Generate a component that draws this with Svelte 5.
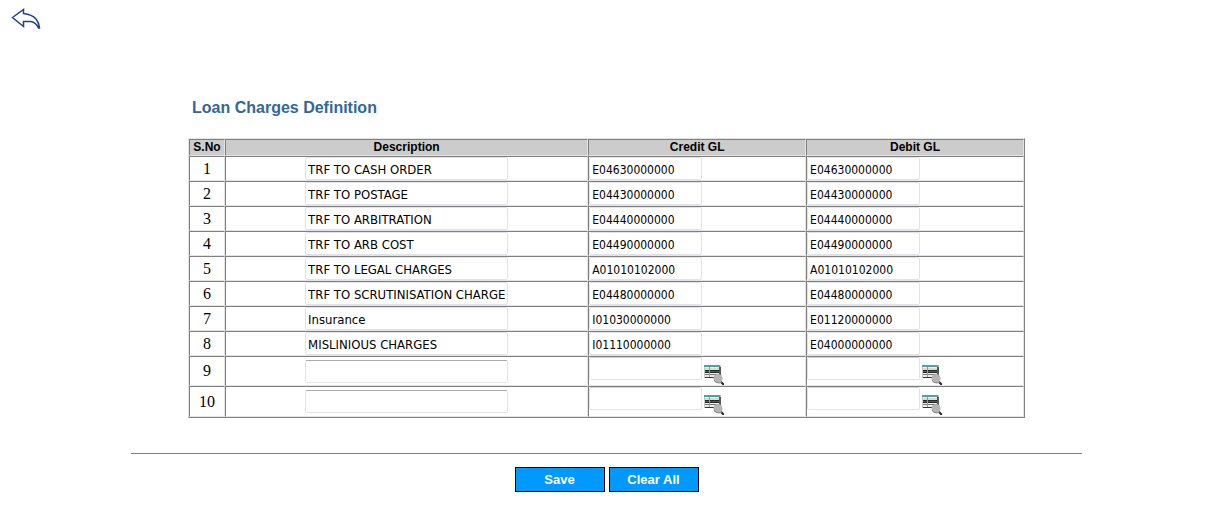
<script>
  const rows = $state([
    { description: 'TRF TO CASH ORDER', credit: 'E04630000000', debit: 'E04630000000' },
    { description: 'TRF TO POSTAGE', credit: 'E04430000000', debit: 'E04430000000' },
    { description: 'TRF TO ARBITRATION', credit: 'E04440000000', debit: 'E04440000000' },
    { description: 'TRF TO ARB COST', credit: 'E04490000000', debit: 'E04490000000' },
    { description: 'TRF TO LEGAL CHARGES', credit: 'A01010102000', debit: 'A01010102000' },
    { description: 'TRF TO SCRUTINISATION CHARGES', credit: 'E04480000000', debit: 'E04480000000' },
    { description: 'Insurance', credit: 'I01030000000', debit: 'E01120000000' },
    { description: 'MISLINIOUS CHARGES', credit: 'I01110000000', debit: 'E04000000000' },
    { description: '', credit: '', debit: '', lookup: true },
    { description: '', credit: '', debit: '', lookup: true }
  ]);

  function clearAll() {
    for (const row of rows) {
      row.description = '';
      row.credit = '';
      row.debit = '';
    }
  }
</script>

{#snippet lookupButton(label)}
  <button type="button" class="lookup" aria-label={label}>
    <svg width="20" height="20" viewBox="0 0 20 20" aria-hidden="true">
      <path d="M0 0h17v13H0z" fill="#c4c8c8" />
      <path d="M0 0h16v2H0z" fill="#4aa5a2" />
      <path d="M1 2h14v1H1z" fill="#f4f4f4" />
      <path d="M1 3h4v2H1zM6 3h9v2H6z" fill="#d5dada" />
      <path d="M1 5h15v3H1z" fill="#262626" />
      <path d="M1 6h15v1H1z" fill="#555" />
      <path d="M1 8h4v1H1zM6 8h9v1H6zM1 10h4v2H1zM6 10h5v2H6z" fill="#eee" />
      <path d="M1 9h14v1H1z" fill="#777" />
      <path d="M1 12h11v1H1z" fill="#333" />
      <path d="M5 2h1v10H5z" fill="#999" />
      <path d="M15 2h2v8h-2z" fill="#555" />
      <path d="M16 16l4 4" stroke="#222" stroke-width="2" />
      <circle cx="14" cy="13.500" r="4.500" fill="#b4b4b4" />
      <path d="M10 15q1 3 5 3l3-1" fill="none" stroke="#888" />
    </svg>
  </button>
{/snippet}

<header>
  <a href="#back" aria-label="Back">
    <svg width="30" height="22" viewBox="0 0 30 22" aria-hidden="true">
      <path
        d="M1.500 9.500L12.500 1.500V5.500Q21 6.500 25 11Q28 14.500 28.500 20H27.500Q25 14.500 20 13.500H12.500V18.500L1.500 9.500Z"
        fill="#fff"
        stroke="#24408c"
        stroke-width="1.500"
      />
    </svg>
  </a>
</header>

<main>
  <form onsubmit={(event) => event.preventDefault()}>
    <section>
      <h1>Loan Charges Definition</h1>
      <table>
        <thead>
          <tr>
            <th scope="col" class="number">S.No</th>
            <th scope="col" class="description">Description</th>
            <th scope="col">Credit GL</th>
            <th scope="col">Debit GL</th>
          </tr>
        </thead>
        <tbody>
          {#each rows as row, i}
            <tr class:open={row.lookup}>
              <td class="number">{i + 1}</td>
              <td class="description">
                <input type="text" aria-label="Description {i + 1}" bind:value={row.description} />
              </td>
              <td>
                <div class="account">
                  <input type="text" aria-label="Credit GL {i + 1}" bind:value={row.credit} />
                  {#if row.lookup}{@render lookupButton(`Find credit GL ${i + 1}`)}{/if}
                </div>
              </td>
              <td>
                <div class="account">
                  <input type="text" aria-label="Debit GL {i + 1}" bind:value={row.debit} />
                  {#if row.lookup}{@render lookupButton(`Find debit GL ${i + 1}`)}{/if}
                </div>
              </td>
            </tr>
          {/each}
        </tbody>
      </table>
    </section>
    <hr />
    <div class="actions">
      <button type="submit">Save</button>
      <button type="button" onclick={clearAll}>Clear All</button>
    </div>
  </form>
</main>

<style>
  :global(body) {
    background: #fff;
    color: #000;
  }

  header {
    display: flex;
    padding: 8px 11px;
  }

  header a,
  header svg,
  .lookup svg {
    display: block;
  }

  section {
    width: 69%;
    margin: 0 auto;
    padding-top: 61px;
  }

  h1 {
    margin: 0 0 21px;
    padding-left: 4px;
    font: bold 16px/18px 'Liberation Sans', Arial, sans-serif;
    color: #369;
  }

  table {
    width: 100%;
    table-layout: fixed;
    border-collapse: separate;
    border-spacing: 0;
    border: 1px solid;
    border-color: #e3e3e3 #808080 #808080 #e3e3e3;
  }

  th,
  td {
    box-sizing: border-box;
    padding: 0;
    border: 1px solid;
    border-color: #808080 #e3e3e3 #e3e3e3 #808080;
  }

  th {
    background: #ccc;
    font: bold 12px/15px 'Liberation Sans', Arial, sans-serif;
  }

  th.number {
    width: 36px;
  }

  th.description {
    width: 43.5%;
  }

  td {
    height: 25px;
    vertical-align: top;
  }

  .open td {
    height: 30px;
  }

  .open:last-child td {
    height: 31px;
  }

  td.number {
    text-align: center;
    vertical-align: middle;
    font: 16px/18px 'Liberation Serif', 'Times New Roman', serif;
  }

  td.description {
    text-align: center;
    vertical-align: middle;
  }

  input {
    display: block;
    box-sizing: border-box;
    width: 113px;
    height: 23px;
    margin: 0;
    padding: 3px 2px 1px;
    border: 1px solid #e2e3ea;
    border-radius: 2px;
    background: #fff;
    color: #000;
    font: 12px/17px 'DejaVu Sans Condensed', Tahoma, sans-serif;
  }

  .open input {
    border-top-color: #ababab;
  }

  .open .account input {
    border-top-color: #d0d1d6;
  }

  .description input {
    width: 203px;
    margin: 0 auto;
    font-size: 13px;
  }

  .account {
    display: flex;
    gap: 2px;
  }

  .lookup {
    margin-top: 8px;
    padding: 0;
    border: 0;
    background: none;
  }

  hr {
    width: 78.4%;
    height: 1px;
    margin: 35px auto 13px;
    border: 0;
    background: #808080;
  }

  .actions {
    display: flex;
    justify-content: center;
    gap: 4px;
  }

  .actions button {
    width: 90px;
    height: 25px;
    padding: 0;
    border: 1px solid #000;
    background: #09f;
    color: #fff;
    font: bold 13px/15px 'Liberation Sans', Arial, sans-serif;
  }
</style>
